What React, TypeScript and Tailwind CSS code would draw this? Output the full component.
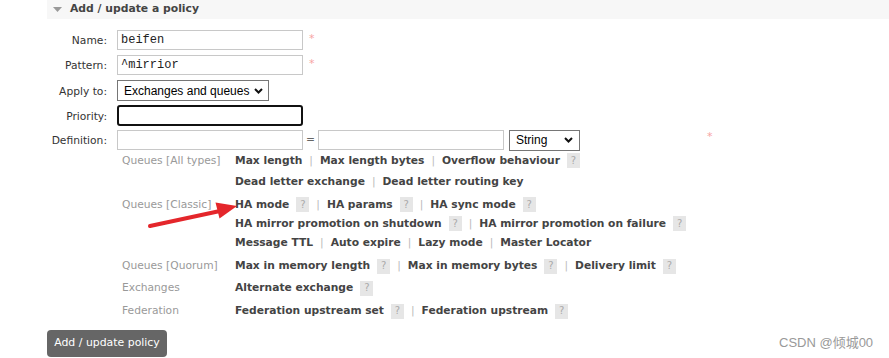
import React from "react";

const Help = () => (
  <span className="inline-flex items-center justify-center w-[13px] h-[15px] ml-[7px] bg-[#e6e6e6] text-[#aaa] text-[10px] font-normal leading-none">
    ?
  </span>
);

const Sep = () => <span className="px-[7px] text-[#bbb] font-normal">|</span>;

const Link = ({ children }: { children: React.ReactNode }) => (
  <span className="font-bold text-[#444]">{children}</span>
);

const Star = ({ className = "" }: { className?: string }) => (
  <span className={"self-start text-[#f7a3a3] text-[11px] leading-none " + className}>*</span>
);

const Chevron = () => (
  <svg width="9" height="6" viewBox="0 0 9 6" className="shrink-0">
    <path d="M1 1 L4.5 4.5 L8 1" fill="none" stroke="#111" strokeWidth="2" />
  </svg>
);

function Row({ label, children, h, mt }: { label: string; children: React.ReactNode; h: string; mt: string }) {
  return (
    <div className={"flex items-center " + h + " " + mt}>
      <span className="w-[60px] mr-[10px] pt-[3px] text-right text-[#333]">{label}</span>
      {children}
    </div>
  );
}

function Group({
  label,
  lines,
  cls = "leading-[20px]",
}: {
  label: string;
  lines: React.ReactNode[];
  cls?: string;
}) {
  return (
    <div className={"flex " + cls}>
      <span className="w-[113px] text-[#999]">{label}</span>
      <div className="flex flex-col">
        {lines.map((l, i) => (
          <div key={i} className="flex items-center whitespace-nowrap">
            {l}
          </div>
        ))}
      </div>
    </div>
  );
}

export default function App() {
  return (
    <div className="relative w-[889px] h-[358px] overflow-hidden bg-white font-['DejaVu_Sans',Verdana,sans-serif] text-[10.7px] text-[#333]">
      {/* section header */}
      <div className="ml-[47px] h-[19px] flex items-center bg-[#f7f7f7]">
        <svg width="9" height="5" viewBox="0 0 9 5" className="ml-[6px]">
          <path d="M0 0 L9 0 L4.5 5 Z" fill="#999" />
        </svg>
        <span className="ml-[8px] font-bold text-[10.8px] text-[#444]">Add / update a policy</span>
      </div>

      <div className="ml-[47px] flex flex-col">
        <Row label="Name:" h="h-[20px]" mt="mt-[11px]">
          <input
            readOnly
            defaultValue="beifen"
            className="w-[186px] h-[20px] border border-[#c8c8c8] px-[3px] font-['Liberation_Mono',monospace] text-[12px] text-[#222] outline-none"
          />
          <Star className="ml-[6px] mt-[3px]" />
        </Row>
        <Row label="Pattern:" h="h-[20px]" mt="mt-[5px]">
          <input
            readOnly
            defaultValue="^mirrior"
            className="w-[186px] h-[20px] border border-[#c8c8c8] px-[3px] font-['Liberation_Mono',monospace] text-[12px] text-[#222] outline-none"
          />
          <Star className="ml-[6px] mt-[3px]" />
        </Row>
        <Row label="Apply to:" h="h-[21px]" mt="mt-[5px]">
          <div className="w-[152px] h-[21px] flex items-center justify-between border border-[#767676] pl-[6px] pr-[5px] font-['Liberation_Sans',Arial,sans-serif] text-[12px] text-black">
            <span>Exchanges and queues</span>
            <Chevron />
          </div>
        </Row>
        <Row label="Priority:" h="h-[21px]" mt="mt-[4px]">
          <input readOnly className="w-[186px] h-[21px] border-2 border-[#111] rounded-[3px] outline-none" />
        </Row>
        <Row label="Definition:" h="h-[20px]" mt="mt-[4px]">
          <input readOnly className="w-[186px] h-[20px] border border-[#c8c8c8] outline-none" />
          <span className="w-[15px] text-center text-[#666]">=</span>
          <input readOnly className="w-[186px] h-[20px] border border-[#c8c8c8] outline-none" />
          <div className="ml-[5px] w-[71px] h-[21px] flex items-center justify-between border border-[#767676] pl-[6px] pr-[6px] font-['Liberation_Sans',Arial,sans-serif] text-[12px] text-black">
            <span>String</span>
            <Chevron />
          </div>
          <Star className="ml-[127px] mt-[1px]" />
        </Row>

        {/* argument shortcuts */}
        <div className="ml-[75px] flex flex-col">
          <Group
            label="Queues [All types]"
            cls="leading-[21px]"
            lines={[
              <>
                <Link>Max length</Link>
                <Sep />
                <Link>Max length bytes</Link>
                <Sep />
                <Link>Overflow behaviour</Link>
                <Help />
              </>,
              <>
                <Link>Dead letter exchange</Link>
                <Sep />
                <Link>Dead letter routing key</Link>
              </>,
            ]}
          />
          <Group
            label="Queues [Classic]"
            cls="leading-[19px] mt-[3px]"
            lines={[
              <>
                <Link>HA mode</Link>
                <Help />
                <Sep />
                <Link>HA params</Link>
                <Help />
                <Sep />
                <Link>HA sync mode</Link>
                <Help />
              </>,
              <>
                <Link>HA mirror promotion on shutdown</Link>
                <Help />
                <Sep />
                <Link>HA mirror promotion on failure</Link>
                <Help />
              </>,
              <>
                <Link>Message TTL</Link>
                <Sep />
                <Link>Auto expire</Link>
                <Sep />
                <Link>Lazy mode</Link>
                <Sep />
                <Link>Master Locator</Link>
              </>,
            ]}
          />
          <Group
            label="Queues [Quorum]"
            cls="leading-[20px] mt-[4px]"
            lines={[
              <>
                <Link>Max in memory length</Link>
                <Help />
                <Sep />
                <Link>Max in memory bytes</Link>
                <Help />
                <Sep />
                <Link>Delivery limit</Link>
                <Help />
              </>,
            ]}
          />
          <Group
            label="Exchanges"
            cls="leading-[20px] mt-[2px]"
            lines={[
              <>
                <Link>Alternate exchange</Link>
                <Help />
              </>,
            ]}
          />
          <Group
            label="Federation"
            cls="leading-[20px] mt-[3px]"
            lines={[
              <>
                <Link>Federation upstream set</Link>
                <Help />
                <Sep />
                <Link>Federation upstream</Link>
                <Help />
              </>,
            ]}
          />
        </div>

        <button className="mt-[9px] w-[120px] h-[27px] rounded-[4px] bg-[#666] text-white text-[10.9px]">
          Add / update policy
        </button>
      </div>

      {/* red annotation arrow */}
      <svg className="absolute left-0 top-0 pointer-events-none" width="889" height="358">
        <line x1="150" y1="226" x2="220" y2="211" stroke="#e4262b" strokeWidth="4" strokeLinecap="round" />
        <polygon points="237,206 215.5,202.5 219.5,218.5" fill="#e4262b" />
      </svg>

      {/* watermark */}
      <span className="absolute left-[779px] top-[333px] font-['Liberation_Sans','Noto_Sans_CJK_SC',sans-serif] text-[13px] text-[#999]">
        CSDN @倾城00
      </span>
    </div>
  );
}
